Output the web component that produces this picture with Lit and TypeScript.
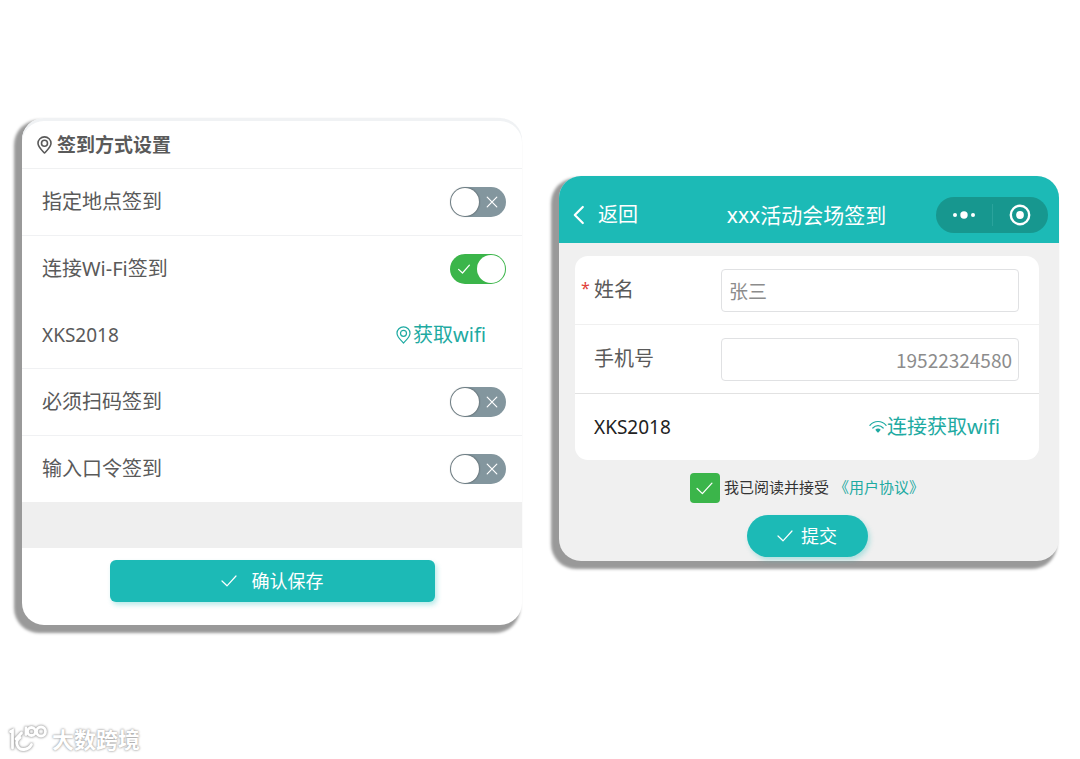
import { LitElement, html, css, svg } from "lit";
import { customElement, property, state } from "lit/decorators.js";

const pinIcon = svg`<svg class="pin" viewBox="0 0 15 18" fill="none" stroke="currentColor" stroke-linejoin="round" aria-hidden="true">
  <path d="M7.500 17C5 14.300 1 11.200 1 7.300A6.500 6.400 0 0 1 14 7.300C14 11.200 10 14.300 7.500 17Z" />
  <circle cx="7.500" cy="7.300" r="3" />
</svg>`;

const wifiIcon = svg`<svg class="wifi" viewBox="0 0 18 14" fill="none" stroke="currentColor" stroke-linecap="round" aria-hidden="true">
  <path stroke-width="1.200" d="M.9 5.400C5.200.2 12.800.2 17.100 5.400" />
  <path stroke-width="1.200" d="M3.800 8C6.700 4.700 11.300 4.700 14.200 8" />
  <path fill="currentColor" stroke="none" d="M6.300 9.800C7.800 8.200 10.200 8.200 11.700 9.800L9.700 12.200Q9 12.900 8.300 12.200Z" />
</svg>`;

const checkIcon = svg`<svg class="check" viewBox="0 0 16 12" fill="none" stroke="currentColor" stroke-width="1.200" stroke-linecap="round" stroke-linejoin="round" aria-hidden="true">
  <path d="M1 6L6 10.800L15 1" />
</svg>`;

const base = css`
  * {
    box-sizing: border-box;
  }
  button,
  input {
    font: inherit;
    margin: 0;
  }
  button {
    border: 0;
    padding: 0;
    background: none;
    color: inherit;
    cursor: pointer;
  }
  svg {
    display: block;
    flex: none;
  }
  .ssid {
    font-size: 19px;
  }
  .action {
    display: flex;
    align-items: center;
    color: #1eaaa2;
  }
  .primary {
    display: flex;
    align-items: center;
    justify-content: center;
    height: 42px;
    background: #1cbab6;
    color: #fff;
    font-size: 18px;
    box-shadow: 2px 3px 5px #1cbab64d;
  }
  .check {
    width: 16px;
    height: 12px;
  }
`;

@customElement("toggle-switch")
export class ToggleSwitch extends LitElement {
  @property({ type: Boolean }) checked = false;
  @property() label = "";

  static styles = css`
    :host {
      display: block;
    }
    .switch {
      display: grid;
      width: 56px;
      height: 30px;
      cursor: pointer;
    }
    .input,
    .mark {
      grid-area: 1 / 1;
    }
    .input {
      appearance: none;
      box-sizing: border-box;
      display: flex;
      align-items: center;
      width: 56px;
      height: 30px;
      margin: 0;
      padding: 0 1px;
      border-radius: 15px;
      background: #83969e;
      cursor: pointer;
    }
    .input::before {
      content: "";
      width: 28px;
      height: 28px;
      border-radius: 50%;
      background: #fff;
      box-shadow: 0 0 2px #0009;
    }
    .input:checked {
      justify-content: flex-end;
      background: #3bb54a;
    }
    .input:checked::before {
      box-shadow: none;
    }
    .mark {
      align-self: center;
      justify-self: end;
      margin: 0 8px;
      width: 12px;
      height: 12px;
      fill: none;
      stroke: #fff;
      stroke-width: 1.200;
      stroke-linecap: round;
      stroke-linejoin: round;
      pointer-events: none;
      z-index: 1;
    }
    .on {
      justify-self: start;
    }
  `;

  render() {
    return html`<label class="switch">
      <input
        class="input"
        type="checkbox"
        role="switch"
        aria-label=${this.label}
        .checked=${this.checked}
        @change=${(e: Event) => (this.checked = (e.target as HTMLInputElement).checked)}
      />
      ${this.checked
        ? html`<svg class="mark on" viewBox="0 0 12 12"><path d="M.6 6.400L4.500 10L11.400 2.200" /></svg>`
        : html`<svg class="mark" viewBox="0 0 12 12"><path d="M1.200 1.200L10.800 10.800M10.800 1.200L1.200 10.800" /></svg>`}
    </label>`;
  }
}

@customElement("settings-card")
export class SettingsCard extends LitElement {
  static styles = [
    base,
    css`
      :host {
        display: block;
      }
      .card {
        border-radius: 22px;
        background: #fff;
        color: #5a5a5a;
        font-size: 20px;
        line-height: 28px;
        box-shadow: inset 0 3px 0 #f0f2f4, -5px 5px 3px 3px #999;
      }
      .head {
        display: flex;
        align-items: center;
        gap: 5px;
        padding: 4px 15px 0;
        height: 51px;
        border-bottom: 1px solid #f0f1f2;
      }
      .title {
        margin: 0;
        font-size: 19px;
        font-weight: 700;
      }
      .pin {
        width: 15px;
        height: 18px;
        stroke-width: 1.600;
      }
      .action .pin {
        stroke-width: 1.200;
      }
      .row {
        display: flex;
        align-items: center;
        justify-content: space-between;
        min-height: 66px;
        padding: 0 16px 0 20px;
      }
      .line {
        border-bottom: 1px solid #f0f1f3;
        min-height: 67px;
      }
      .network {
        padding-right: 36px;
      }
      .action {
        gap: 2px;
      }
      .band {
        height: 46px;
        background: #efefef;
      }
      .foot {
        display: flex;
        justify-content: center;
        padding: 12px 0 23px;
      }
      .save {
        width: 65%;
        border-radius: 6px;
        gap: 15px;
      }
    `,
  ];

  render() {
    return html`<section class="card">
      <header class="head">${pinIcon}<h2 class="title">签到方式设置</h2></header>
      <div class="row line"><span>指定地点签到</span><toggle-switch label="指定地点签到"></toggle-switch></div>
      <div class="row"><span>连接Wi-Fi签到</span><toggle-switch label="连接Wi-Fi签到" checked></toggle-switch></div>
      <div class="row line network">
        <span class="ssid">XKS2018</span>
        <button class="action" type="button">${pinIcon}<span>获取wifi</span></button>
      </div>
      <div class="row line"><span>必须扫码签到</span><toggle-switch label="必须扫码签到"></toggle-switch></div>
      <div class="row"><span>输入口令签到</span><toggle-switch label="输入口令签到"></toggle-switch></div>
      <div class="band"></div>
      <footer class="foot">
        <button class="primary save" type="button">${checkIcon}<span>确认保存</span></button>
      </footer>
    </section>`;
  }
}

@customElement("checkin-card")
export class CheckinCard extends LitElement {
  @state() private agreed = true;

  static styles = [
    base,
    css`
      :host {
        display: block;
      }
      .card {
        border-radius: 22px;
        background: #f0f0f0;
        color: #5a5a5a;
        font-size: 20px;
        line-height: 28px;
        box-shadow: -5px 5px 3px 3px #999;
      }
      .bar {
        display: grid;
        grid-template-columns: 1fr auto 1fr;
        align-items: center;
        height: 67px;
        padding: 10px 11px 0 14px;
        border-radius: 22px 22px 0 0;
        background: #1cbab6;
        color: #fff;
      }
      .back {
        display: flex;
        align-items: center;
        justify-self: start;
        gap: 13px;
      }
      .chevron {
        width: 12px;
        height: 20px;
      }
      .title {
        margin: 0;
        padding-right: 8px;
        font-size: 21px;
        font-weight: 400;
      }
      .capsule {
        display: grid;
        grid-template-columns: 1fr 1px 1fr;
        align-items: center;
        justify-items: center;
        justify-self: end;
        width: 112px;
        height: 36px;
        border-radius: 18px;
        background: #17978f;
      }
      .divider {
        width: 1px;
        height: 22px;
        background: #2aa39c;
      }
      .body {
        padding: 13px 20px 4px 16px;
      }
      .form {
        border-radius: 13px;
        background: #fff;
      }
      .row {
        display: flex;
        align-items: center;
        min-height: 69px;
        padding: 0 20px 0 6px;
        border-bottom: 1px solid #f0f0f0;
      }
      .strong {
        border-color: #e2e2e2;
      }
      .label {
        display: flex;
        width: 140px;
        flex: none;
      }
      .star {
        width: 13px;
        color: #e0403a;
        font-size: 16px;
        line-height: 24px;
      }
      .field {
        flex: 1;
        min-width: 0;
        height: 43px;
        padding: 0 7px;
        border: 1px solid #e0e1e3;
        border-radius: 4px;
        background: #fff;
        color: #8c8c8c;
        font-family: "Noto Sans CJK SC", sans-serif;
        font-size: 19px;
        outline: none;
      }
      .number {
        padding-right: 6px;
        text-align: right;
      }
      .network {
        justify-content: space-between;
        min-height: 66px;
        padding: 0 39px 0 19px;
        border: 0;
        color: #222;
      }
      .wifi {
        width: 18px;
        height: 14px;
      }
      .terms {
        display: flex;
        justify-content: center;
        margin: 13px 0 12px;
        color: #333;
        font-size: 15px;
      }
      .agree {
        display: flex;
        gap: 4px;
        cursor: pointer;
      }
      .box {
        display: grid;
        place-items: center;
        color: #fff;
      }
      .tick,
      .box .check {
        grid-area: 1 / 1;
      }
      .box .check {
        z-index: 1;
        width: 17px;
        height: 13px;
        pointer-events: none;
      }
      .tick {
        appearance: none;
        width: 30px;
        height: 30px;
        border-radius: 4px;
        background: #fff;
        cursor: pointer;
      }
      .tick:checked {
        background: #3bb54a;
      }
      .link {
        margin-left: 5px;
        color: #1eaaa2;
        text-decoration: none;
      }
      .submit {
        width: 121px;
        margin: 0 auto;
        border-radius: 21px;
        gap: 8px;
      }
    `,
  ];

  render() {
    return html`<section class="card">
      <header class="bar">
        <button class="back" type="button">
          <svg class="chevron" viewBox="0 0 12 20" fill="none" stroke="currentColor" stroke-width="2.200" stroke-linecap="round" stroke-linejoin="round" aria-hidden="true">
            <path d="M9.800 2L1.800 10L9.800 18" />
          </svg>
          <span>返回</span>
        </button>
        <h2 class="title">xxx活动会场签到</h2>
        <div class="capsule">
          <button type="button" aria-label="更多">
            <svg width="24" height="10" viewBox="0 0 24 10" fill="currentColor">
              <circle cx="3" cy="5" r="2" /><circle cx="12" cy="5" r="3.700" /><circle cx="21" cy="5" r="2" />
            </svg>
          </button>
          <span class="divider"></span>
          <button type="button" aria-label="关闭">
            <svg width="22" height="22" viewBox="0 0 22 22">
              <circle cx="11" cy="11" r="9.200" fill="none" stroke="currentColor" stroke-width="2.400" />
              <circle cx="11" cy="11" r="3.900" fill="currentColor" />
            </svg>
          </button>
        </div>
      </header>
      <form class="body" @submit=${(e: Event) => e.preventDefault()}>
        <div class="form">
          <div class="row">
            <label class="label" for="name"><span class="star">*</span>姓名</label>
            <input class="field" id="name" type="text" value="张三" />
          </div>
          <div class="row strong">
            <label class="label" for="phone"><span class="star"></span>手机号</label>
            <input class="field number" id="phone" type="tel" value="19522324580" />
          </div>
          <div class="row network">
            <span class="ssid">XKS2018</span>
            <button class="action" type="button">${wifiIcon}<span>连接获取wifi</span></button>
          </div>
        </div>
        <div class="terms">
          <label class="agree">
            <span class="box">
              <input
                class="tick"
                type="checkbox"
                .checked=${this.agreed}
                @change=${(e: Event) => (this.agreed = (e.target as HTMLInputElement).checked)}
              />
              ${this.agreed ? checkIcon : ""}
            </span>
            <span>我已阅读并接受</span>
          </label>
          <a class="link" href="#">《用户协议》</a>
        </div>
        <button class="primary submit" type="submit">${checkIcon}<span>提交</span></button>
      </form>
    </section>`;
  }
}

@customElement("app-root")
export class AppRoot extends LitElement {
  static styles = css`
    :host {
      display: flex;
      flex-direction: column;
      box-sizing: border-box;
      min-height: 100vh;
      background: #fff;
      font-family: "Noto Sans", "Noto Sans CJK SC", sans-serif;
    }
    .cards {
      display: grid;
      grid-template-columns: 1fr 1fr;
      align-items: start;
      gap: 37px;
      padding: 118px 21px 40px 22px;
    }
    .second {
      margin-top: 58px;
    }
    .brand {
      display: flex;
      align-items: center;
      gap: 4px;
      margin-top: auto;
      padding: 0 8px 5px;
      color: #fff;
      font-size: 22px;
      font-weight: 700;
      line-height: 30px;
      text-shadow: 0 0 2px #999, 0 0 3px #bbb;
    }
    .logo {
      width: 40px;
      height: 30px;
      filter: drop-shadow(0 0 1px #999) drop-shadow(0 0 1px #ccc);
    }
  `;

  render() {
    return html`
      <main class="cards">
        <settings-card></settings-card>
        <checkin-card class="second"></checkin-card>
      </main>
      <footer class="brand">
        <svg class="logo" viewBox="0 0 40 30" fill="none" stroke="#fff" stroke-width="2.800" stroke-linecap="round" aria-hidden="true">
          <path d="M2.500 7.500L4.500 6.500V24M13.500 9L8 15" />
          <path d="M12 13.500C6 17 9 26 16 25.500Q21 25 23.500 20.500" />
          <path d="M18 4V10.500" />
          <circle cx="23.500" cy="7.500" r="4" />
          <circle cx="33" cy="7.500" r="4.500" />
        </svg>
        <span>大数跨境</span>
      </footer>
    `;
  }
}
